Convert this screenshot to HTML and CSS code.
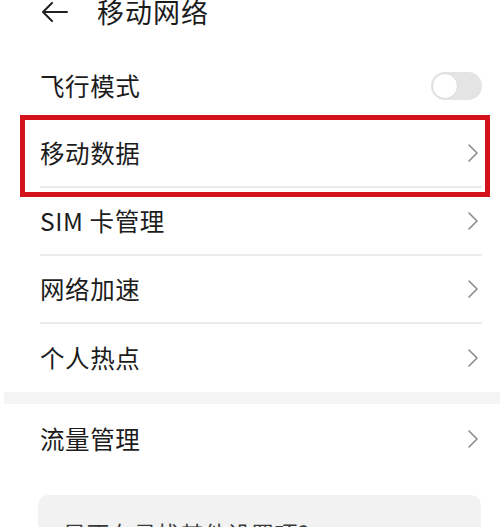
FILE: index.html
```html
<!DOCTYPE html>
<html lang="zh-CN">
<head>
<meta charset="utf-8">
<link rel="stylesheet" href="styles.css">
</head>
<body>
<div class="page">
  <header class="header">
    <svg class="back" width="28" height="20" viewBox="0 0 28 20"><path d="M26 10H2M11 1L2 10l9 9" fill="none" stroke="#222" stroke-width="2" stroke-linecap="round" stroke-linejoin="round"/></svg>
    <h1 class="title">移动网络</h1>
  </header>
  <div class="list">
    <div class="row">
      <span class="label">飞行模式</span>
      <span class="toggle"><span class="knob"></span></span>
    </div>
    <div class="row sep">
      <span class="label">移动数据</span>
      <svg class="chev" width="12" height="20" viewBox="0 0 12 20"><path d="M2 2l8 8-8 8" fill="none" stroke="#8a8a8a" stroke-width="1.6" stroke-linecap="round" stroke-linejoin="round"/></svg>
    </div>
    <div class="row sep">
      <span class="label">SIM 卡管理</span>
      <svg class="chev" width="12" height="20" viewBox="0 0 12 20"><path d="M2 2l8 8-8 8" fill="none" stroke="#8a8a8a" stroke-width="1.6" stroke-linecap="round" stroke-linejoin="round"/></svg>
    </div>
    <div class="row sep">
      <span class="label">网络加速</span>
      <svg class="chev" width="12" height="20" viewBox="0 0 12 20"><path d="M2 2l8 8-8 8" fill="none" stroke="#8a8a8a" stroke-width="1.6" stroke-linecap="round" stroke-linejoin="round"/></svg>
    </div>
    <div class="row">
      <span class="label">个人热点</span>
      <svg class="chev" width="12" height="20" viewBox="0 0 12 20"><path d="M2 2l8 8-8 8" fill="none" stroke="#8a8a8a" stroke-width="1.6" stroke-linecap="round" stroke-linejoin="round"/></svg>
    </div>
  </div>
  <div class="band"></div>
  <div class="list">
    <div class="row tall">
      <span class="label">流量管理</span>
      <svg class="chev" width="12" height="20" viewBox="0 0 12 20"><path d="M2 2l8 8-8 8" fill="none" stroke="#8a8a8a" stroke-width="1.6" stroke-linecap="round" stroke-linejoin="round"/></svg>
    </div>
  </div>
  <div class="card">
    <p class="card-text">是否在寻找其他设置项?</p>
  </div>
  <div class="highlight"></div>
</div>
</body>
</html>
```

FILE: styles.css
```css
html, body {
  margin: 0;
  padding: 0;
  background: #ffffff;
}
body {
  font-family: "Noto Sans CJK SC", "Noto Sans", sans-serif;
  color: #1c1c1c;
  overflow: hidden;
}
.page {
  position: relative;
  width: 500px;
  height: 527px;
  overflow: hidden;
}
.header {
  display: flex;
  align-items: center;
  height: 26px;
  margin-top: -1px;
  padding-left: 41px;
}
.back {
  display: block;
  margin-right: 28px;
}
.title {
  margin: 0;
  font-size: 27px;
  font-weight: 400;
  line-height: 26px;
  letter-spacing: 1px;
}
.list {
  padding: 0 18px 0 40px;
}
.list:first-of-type {
  margin-top: 27px;
}
.row {
  display: flex;
  align-items: center;
  justify-content: space-between;
  height: 68px;
  box-sizing: border-box;
}
.row.sep {
  border-bottom: 2px solid #ececec;
}
.row.tall {
  height: 70px;
}
.label {
  font-size: 24.5px;
  line-height: 1;
  letter-spacing: 0.6px;
}
.chev {
  display: block;
  margin-right: 3px;
}
.toggle {
  position: relative;
  display: block;
  width: 51px;
  height: 28px;
  border-radius: 14px;
  background: #e4e4e4;
}
.knob {
  position: absolute;
  left: 1px;
  top: 1px;
  width: 24px;
  height: 24px;
  border-radius: 50%;
  background: #ffffff;
  border: 1px solid #dcdcdc;
}
.band {
  height: 12px;
  margin-left: 4px;
  background: #f5f5f5;
}
.card {
  margin: 21px 19px 0 38px;
  height: 80px;
  border-radius: 10px;
  background: #f2f2f2;
  padding: 24px 0 0 25px;
  box-sizing: border-box;
}
.card-text {
  margin: 0;
  font-size: 23px;
  line-height: 28px;
  color: #3a3a3a;
  letter-spacing: 0.5px;
}
.highlight {
  position: absolute;
  left: 20px;
  top: 115px;
  width: 470px;
  height: 82px;
  box-sizing: border-box;
  border: 5px solid #d5121c;
}
```
